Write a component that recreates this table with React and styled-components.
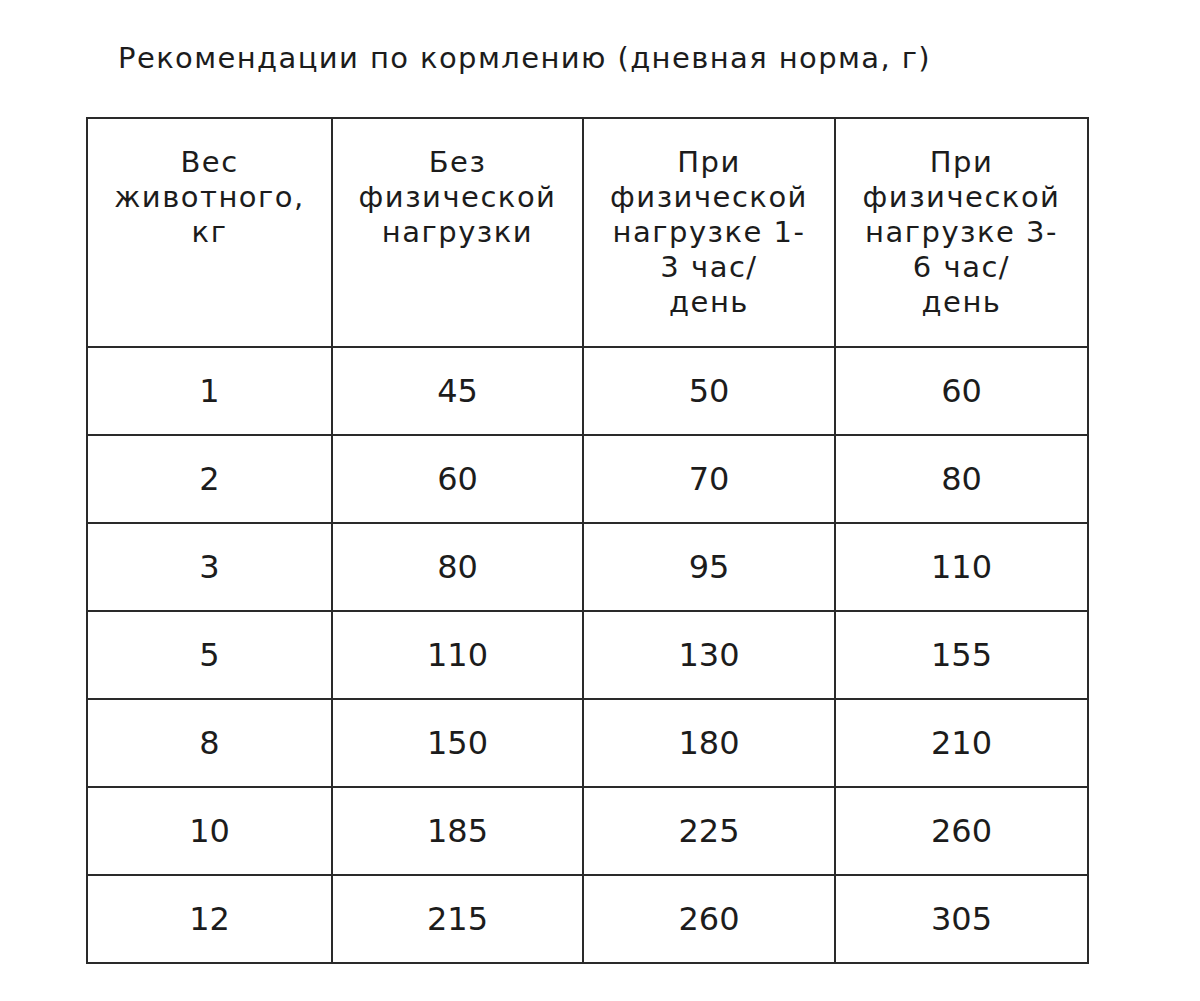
import React from "react";
import styled, { createGlobalStyle } from "styled-components";

const Global = createGlobalStyle`
  html, body { margin: 0; padding: 0; background: #ffffff; }
  body { font-family: "DejaVu Sans", "Noto Sans", sans-serif; color: #1c1c1c; }
`;

const Page = styled.div`
  width: 1200px;
  height: 1001px;
  box-sizing: border-box;
  padding: 41px 0 0 86px;
  background: #fff;
`;

const Title = styled.h2`
  margin: 0 0 41px 32px;
  font-size: 29px;
  line-height: 35px;
  letter-spacing: 1.4px;
  font-weight: 400;
  color: #1c1c1c;
`;

const Grid = styled.div`
  display: grid;
  grid-template-columns: 245px 251px 252px 253px;
  grid-auto-rows: 88px;
  grid-template-rows: 229px;
  width: 1003px;
  box-sizing: border-box;
  border-top: 2px solid #2a2a2a;
  border-left: 2px solid #2a2a2a;
`;

const Cell = styled.div`
  box-sizing: border-box;
  border-right: 2px solid #2a2a2a;
  border-bottom: 2px solid #2a2a2a;
  display: flex;
  justify-content: center;
  align-items: ${(p) => (p.$head ? "flex-start" : "center")};
  padding-top: ${(p) => (p.$head ? "26px" : "0")};
  text-align: center;
  font-size: ${(p) => (p.$head ? "29px" : "32px")};
  line-height: 35px;
  letter-spacing: ${(p) => (p.$head ? "1.5px" : "0")};
  color: #1c1c1c;
`;

const head = [
  ["Вес", "животного,", "кг"],
  ["Без", "физической", "нагрузки"],
  ["При", "физической", "нагрузке 1-", "3 час/", "день"],
  ["При", "физической", "нагрузке 3-", "6 час/", "день"],
];

const rows = [
  ["1", "45", "50", "60"],
  ["2", "60", "70", "80"],
  ["3", "80", "95", "110"],
  ["5", "110", "130", "155"],
  ["8", "150", "180", "210"],
  ["10", "185", "225", "260"],
  ["12", "215", "260", "305"],
];

export default function App() {
  return (
    <Page>
      <Global />
      <Title>Рекомендации по кормлению (дневная норма, г)</Title>
      <Grid>
        {head.map((lines, i) => (
          <Cell key={"h" + i} $head>
            <div>
              {lines.map((l, j) => (
                <React.Fragment key={j}>
                  {l}
                  {j < lines.length - 1 && <br />}
                </React.Fragment>
              ))}
            </div>
          </Cell>
        ))}
        {rows.map((r, i) =>
          r.map((v, j) => <Cell key={i + "-" + j}>{v}</Cell>)
        )}
      </Grid>
    </Page>
  );
}
